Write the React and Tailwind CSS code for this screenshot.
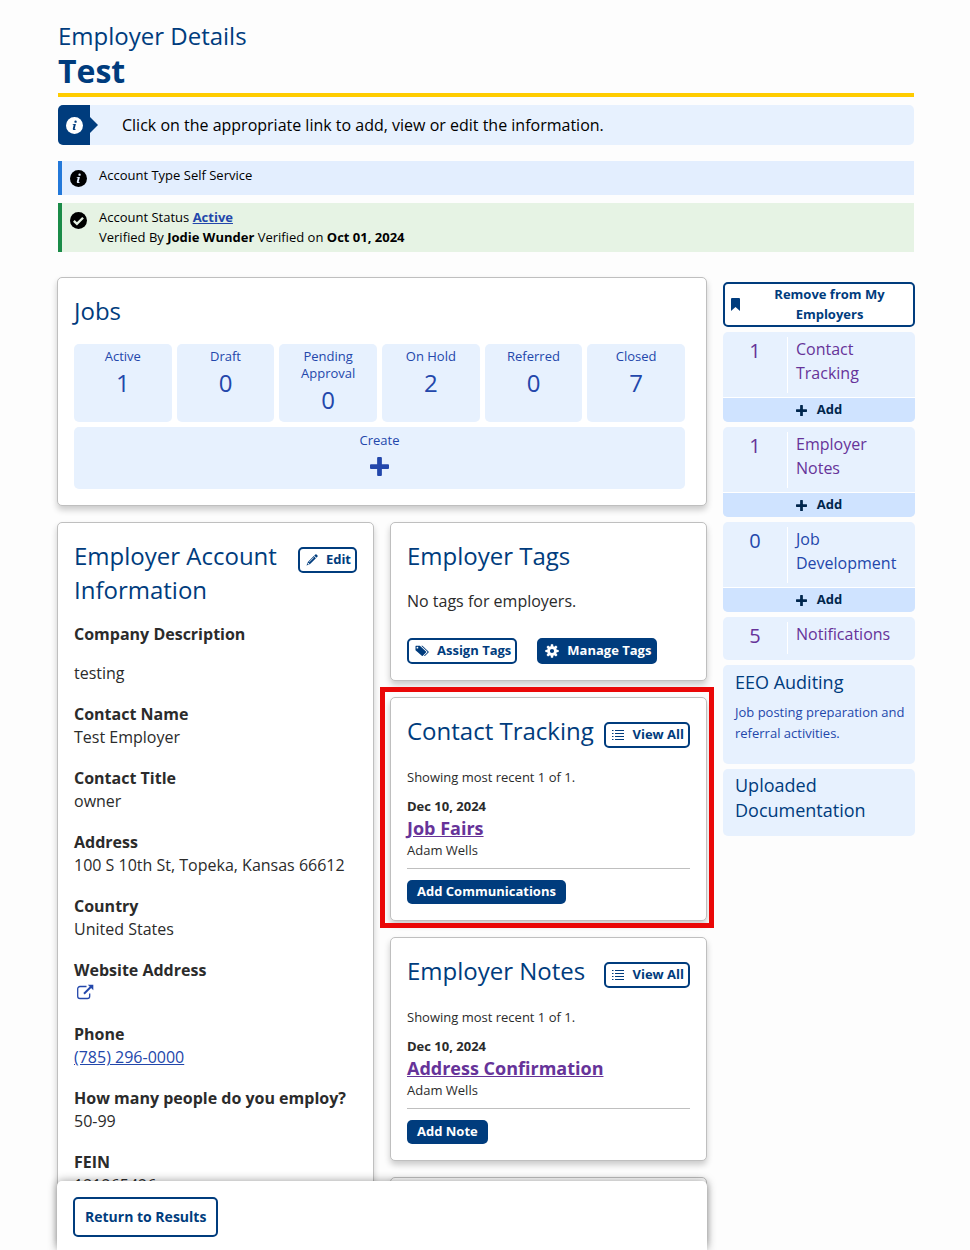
import clsx from 'clsx';

const jobs = [
  { label: 'Active', total: 1 },
  { label: 'Draft', total: 0 },
  { label: 'Pending Approval', total: 0 },
  { label: 'On Hold', total: 2 },
  { label: 'Referred', total: 0 },
  { label: 'Closed', total: 7 },
];

const details = [
  { label: 'Contact Name', value: 'Test Employer' },
  { label: 'Contact Title', value: 'owner' },
  { label: 'Address', value: '100 S 10th St, Topeka, Kansas 66612' },
  { label: 'Country', value: 'United States' },
  { label: 'Website Address', website: true },
  { label: 'Phone', value: '(785) 296-0000', href: 'tel:7852960000' },
  { label: 'How many people do you employ?', value: '50-99' },
  { label: 'FEIN', value: '121265426' },
];

const counters = [
  { label: 'Contact Tracking', total: 1, visited: true, add: true },
  { label: 'Employer Notes', total: 1, visited: true, add: true },
  { label: 'Job Development', total: 0, visited: false, add: true },
  { label: 'Notifications', total: 5, visited: true, add: false },
];

function InfoIcon({ className }) {
  return (
    <svg viewBox="0 0 16 16" className={className} aria-hidden="true">
      <circle cx="8" cy="8" r="8" fill="currentColor" />
      <g className="fill-(--dot)">
        <circle cx="9" cy="4.4" r="1.1" />
        <path d="M6.4 6.6h2.9L8.2 11c0 .5.4.3 1 0l-.1.7c-1.1.8-2.9.9-2.7-.6l.9-3.7h-1z" />
      </g>
    </svg>
  );
}

function CheckIcon({ className }) {
  return (
    <svg viewBox="0 0 16 16" className={className} aria-hidden="true">
      <circle cx="8" cy="8" r="8" fill="currentColor" />
      <path d="M3.6 8.4l2.9 2.8 5.8-5.8" fill="none" className="stroke-(--dot)" strokeWidth="2.2" />
    </svg>
  );
}

function PlusIcon({ className }) {
  return (
    <svg viewBox="0 0 20 20" className={className} fill="currentColor" aria-hidden="true">
      <path d="M8.5 0h3q1 0 1 1v6.5H19q1 0 1 1v3q0 1-1 1h-6.5V19q0 1-1 1h-3q-1 0-1-1v-6.5H1q-1 0-1-1v-3q0-1 1-1h6.5V1q0-1 1-1z" />
    </svg>
  );
}

function PencilIcon() {
  return (
    <svg viewBox="0 0 12 12" className="size-3" fill="currentColor" aria-hidden="true">
      <path d="M8.2 1.6L9.4.5q.6-.5 1.1 0l1 1q.5.5 0 1.1l-1.1 1.2z" />
      <path fillRule="evenodd" d="M7.7 2.100L9.900 4.300 4.100 10.100.500 11.500 1.900 7.900zM7.500 3.300L2.900 7.900l.4.4 4.600-4.600zM2.200 8.700L1.700 10.100l.3.3L3.400 9.800z" />
    </svg>
  );
}

function TagsIcon() {
  return (
    <svg viewBox="0 0 14 12" className="h-3 w-3.5" fill="currentColor" aria-hidden="true">
      <path fillRule="evenodd" d="M.9.8h4L11 6.4q.5.5 0 1L7.8 10.7q-.5.5-1 0L.5 5.2V1.2zM2.4 1.8a.9.9 0 100 1.8.9.9 0 000-1.8z" />
      <path d="M6.2.8h1.2l6.1 5.600q.5.5 0 1L10.2 10.7q-.7.5-1.2 0l3.3-3.3q.4-.5 0-1z" />
    </svg>
  );
}

function CogIcon() {
  const teeth = [0, 45, 90, 135, 180, 225, 270, 315];
  return (
    <svg viewBox="0 0 14 14" className="size-3.5" fill="currentColor" aria-hidden="true">
      {teeth.map((angle) => (
        <path key={angle} d="M5.9.3h2.2l.4 3h-3z" transform={`rotate(${angle} 7 7)`} />
      ))}
      <path fillRule="evenodd" d="M7 2.2a4.8 4.8 0 100 9.6 4.8 4.8 0 000-9.6zM7 4.9a2.1 2.1 0 110 4.2 2.1 2.1 0 010-4.2z" />
    </svg>
  );
}

function ListIcon() {
  return (
    <svg viewBox="0 0 12 12" className="size-3" fill="currentColor" aria-hidden="true">
      <path d="M0 1h1.500v1H0zM3 1h9v1H3zM0 4h1.500v1H0zM3 4h9v1H3zM0 7h1.500v1H0zM3 7h9v1H3zM0 10h1.500v1H0zM3 10h9v1H3z" />
    </svg>
  );
}

function BookmarkIcon() {
  return (
    <svg viewBox="0 0 9 13" className="h-[13px] w-[9px] shrink-0" fill="currentColor" aria-hidden="true">
      <path d="M1 0h7q1 0 1 1v12L4.5 9 0 13V1q0-1 1-1z" />
    </svg>
  );
}

function ExternalIcon() {
  return (
    <svg viewBox="0 0 17 16" className="h-4 w-[17px]" fill="none" stroke="currentColor" aria-hidden="true">
      <path d="M9.500 2.500H3A2.300 2.300 0 00.7 4.800v7.400A2.300 2.300 0 003 14.500h7.400a2.300 2.300 0 002.300-2.300V9.500" strokeWidth="1.3" />
      <path d="M7 9.8l7-7" strokeWidth="2" />
      <path d="M10.8.8h5.5v5.5z" fill="currentColor" stroke="none" />
    </svg>
  );
}

function Card({ className, children }) {
  return (
    <section className={clsx('rounded-[5px] border border-[#bfbfbf] bg-white p-4 shadow-[0_4px_6px_rgba(0,0,0,0.2)]', className)}>
      {children}
    </section>
  );
}

function Heading({ children }) {
  return <h2 className="text-2xl leading-[34px] text-[#003c7d]">{children}</h2>;
}

function SmallButton({ solid, icon, children }) {
  return (
    <button
      type="button"
      className={clsx(
        'flex h-[26px] shrink-0 items-center gap-2 rounded-[5px] border-2 border-[#003c7d] pr-1 pl-1.5 text-[13px] font-bold',
        solid ? 'bg-[#003c7d] text-white' : 'bg-white text-[#003c7d]'
      )}
    >
      {icon}
      {children}
    </button>
  );
}

function RecentCard({ title, link, action }) {
  return (
    <Card>
      <div className="flex items-start justify-between">
        <Heading>{title}</Heading>
        <div className="mt-2">
          <SmallButton icon={<ListIcon />}>View All</SmallButton>
        </div>
      </div>
      <div className="mt-[19px] text-[13px] leading-5">
        <p>Showing most recent 1 of 1.</p>
        <p className="mt-[9px] font-bold">Dec 10, 2024</p>
        <a href="#" className="text-lg leading-6 font-bold text-[#663399] underline">{link}</a>
        <p>Adam Wells</p>
      </div>
      <hr className="mt-2 mb-[9px] border-[#bfbfbf]" />
      <button type="button" className="h-6 rounded-[5px] bg-[#003c7d] px-2.5 text-[13px] font-bold text-white">
        {action}
      </button>
    </Card>
  );
}

function Counter({ item }) {
  return (
    <div className="overflow-hidden rounded-[5px] bg-[#e7f1fe]">
      <a
        href="#"
        className={clsx('flex pt-[5px]', item.add ? 'pb-1' : 'pb-1.5', item.visited ? 'text-[#663399]' : 'text-[#2347ab]')}
      >
        <span className="w-16 text-center text-xl leading-7">{item.total}</span>
        <span className="flex-1 border-l border-white pr-4 pb-2 pl-2 leading-6">{item.label}</span>
      </a>
      {item.add && (
        <button
          type="button"
          className="flex h-[25px] w-full items-center justify-center gap-2.5 border-t border-white bg-[#cfe3ff] text-[13px] font-bold text-[#00264d]"
        >
          <PlusIcon className="size-[11px]" />
          Add
        </button>
      )}
    </div>
  );
}

export default function App() {
  return (
    <div className="h-screen overflow-y-auto bg-[#fdfdfd] pr-[55px] pl-[57px] font-['Open_Sans',sans-serif] text-base text-[#2b2b2b] [scrollbar-width:none]">
      <header className="mx-px pt-5">
        <h1 className="border-b-4 border-[#ffcc00] pb-1 text-[#003c7d]">
          <span className="block text-2xl leading-8">Employer Details</span>
          <span className="block text-[32px] leading-[37px] font-bold">Test</span>
        </h1>

        <div className="mt-2 flex h-10 items-center overflow-hidden rounded-[5px] bg-[#e7f1fe] text-black">
          <div className="flex h-full w-8 items-center justify-center bg-[#003c7d]">
            <InfoIcon className="size-[17px] text-white [--dot:#003c7d]" />
          </div>
          <svg viewBox="0 0 8 16" className="h-4 w-2 text-[#003c7d]" fill="currentColor" aria-hidden="true">
            <path d="M0 0l8 8-8 8z" />
          </svg>
          <p className="pl-6">Click on the appropriate link to add, view or edit the information.</p>
        </div>

        <div className="mt-4 flex border-l-4 border-[#2378d9] bg-[#e3eefe] px-2 pt-1 pb-2 text-[13px] leading-5 text-black">
          <InfoIcon className="mt-[5px] mr-3 size-[17px] [--dot:#e3eefe]" />
          <p>Account Type Self Service</p>
        </div>

        <div className="mt-2 flex border-l-4 border-[#1b8b48] bg-[#e6f3e4] px-2 pt-1 pb-[5px] text-[13px] leading-5 text-black">
          <CheckIcon className="mt-[5px] mr-3 size-[17px] [--dot:#e6f3e4]" />
          <div>
            <p>Account Status <a href="#" className="font-bold text-[#2347ab] underline">Active</a></p>
            <p>Verified By <strong>Jodie Wunder</strong> Verified on <strong>Oct 01, 2024</strong></p>
          </div>
        </div>
      </header>

      <div className="mt-[25px] flex gap-4">
        <main className="min-w-0 flex-1">
          <Card>
            <Heading>Jobs</Heading>
            <div className="mt-4 grid grid-cols-6 gap-[5px] pr-[5px] text-center text-[#2347ab]">
              {jobs.map((job) => (
                <a key={job.label} href="#" className="flex h-[78px] flex-col items-center rounded-[5px] bg-[#e7f1fe] px-3 pt-1">
                  <span className="text-[13px] leading-[17px]">{job.label}</span>
                  <span className="text-2xl leading-9">{job.total}</span>
                </a>
              ))}
              <a href="#" className="col-span-6 flex h-[62px] flex-col items-center rounded-[5px] bg-[#e7f1fe] pt-[5px]">
                <span className="text-[13px] leading-[17px]">Create</span>
                <PlusIcon className="mt-2 size-[19px]" />
              </a>
            </div>
          </Card>

          <div className="mt-4 grid grid-cols-2 gap-4">
            <Card>
              <div className="flex items-start justify-between">
                <Heading>Employer Account Information</Heading>
                <div className="mt-2">
                  <SmallButton icon={<PencilIcon />}>Edit</SmallButton>
                </div>
              </div>
              <dl className="mt-4 leading-[23px]">
                <dt className="font-bold">Company Description</dt>
                <dd className="mt-4 mb-[18px]">testing</dd>
                {details.map((row) => (
                  <div key={row.label} className="mb-[18px]">
                    <dt className="font-bold">{row.label}</dt>
                    <dd>
                      {row.website && (
                        <a href="#" aria-label="Website" className="flex h-[23px] items-start pt-0.5 pl-[3px] text-[#2347ab]">
                          <ExternalIcon />
                        </a>
                      )}
                      {row.href ? <a href={row.href} className="text-[#2347ab] underline">{row.value}</a> : row.value}
                    </dd>
                  </div>
                ))}
              </dl>
            </Card>

            <div className="flex flex-col gap-4">
              <Card>
                <Heading>Employer Tags</Heading>
                <p className="mt-4">No tags for employers.</p>
                <div className="mt-[25px] flex gap-5">
                  <SmallButton icon={<TagsIcon />}>Assign Tags</SmallButton>
                  <SmallButton solid icon={<CogIcon />}>Manage Tags</SmallButton>
                </div>
              </Card>

              <div className="relative">
                <RecentCard title="Contact Tracking" link="Job Fairs" action="Add Communications" />
                {/* highlight frame around the card */}
                <div className="pointer-events-none absolute -top-2.5 -right-[7px] -bottom-[7px] -left-2.5 border-5 border-[#ea0707]" />
              </div>

              <RecentCard title="Employer Notes" link="Address Confirmation" action="Add Note" />
              <Card className="min-h-16" />
            </div>
          </div>

          <footer className="sticky bottom-0 rounded-t-[5px] bg-white px-4 pt-4 pb-[13px] shadow-[0_0_10px_rgba(0,0,0,0.4)]">
            <button type="button" className="h-10 rounded-[5px] border-2 border-[#003c7d] bg-white px-2.5 text-sm font-bold text-[#003c7d]">
              Return to Results
            </button>
          </footer>
        </main>

        <aside className="mt-[5px] flex w-48 shrink-0 flex-col gap-[5px]">
          <button
            type="button"
            className="flex items-center rounded-[5px] border-2 border-[#003c7d] bg-white pb-px pl-1.5 text-[13px] leading-5 font-bold text-[#003c7d]"
          >
            <BookmarkIcon />
            <span className="flex-1 pr-6.5 pl-8">Remove from My Employers</span>
          </button>
          {counters.map((item) => (
            <Counter key={item.label} item={item} />
          ))}
          <a href="#" className="rounded-[5px] bg-[#e7f1fe] pt-[5px] pr-2 pb-5 pl-3">
            <h3 className="text-lg leading-[25px] text-[#003c7d]">EEO Auditing</h3>
            <p className="mt-[7px] text-[13px] leading-[21px] text-[#2347ab]">Job posting preparation and referral activities.</p>
          </a>
          <a href="#" className="rounded-[5px] bg-[#e7f1fe] pt-1 pr-2 pb-[13px] pl-3">
            <h3 className="text-lg leading-[25px] text-[#003c7d]">Uploaded Documentation</h3>
          </a>
        </aside>
      </div>
    </div>
  );
}
